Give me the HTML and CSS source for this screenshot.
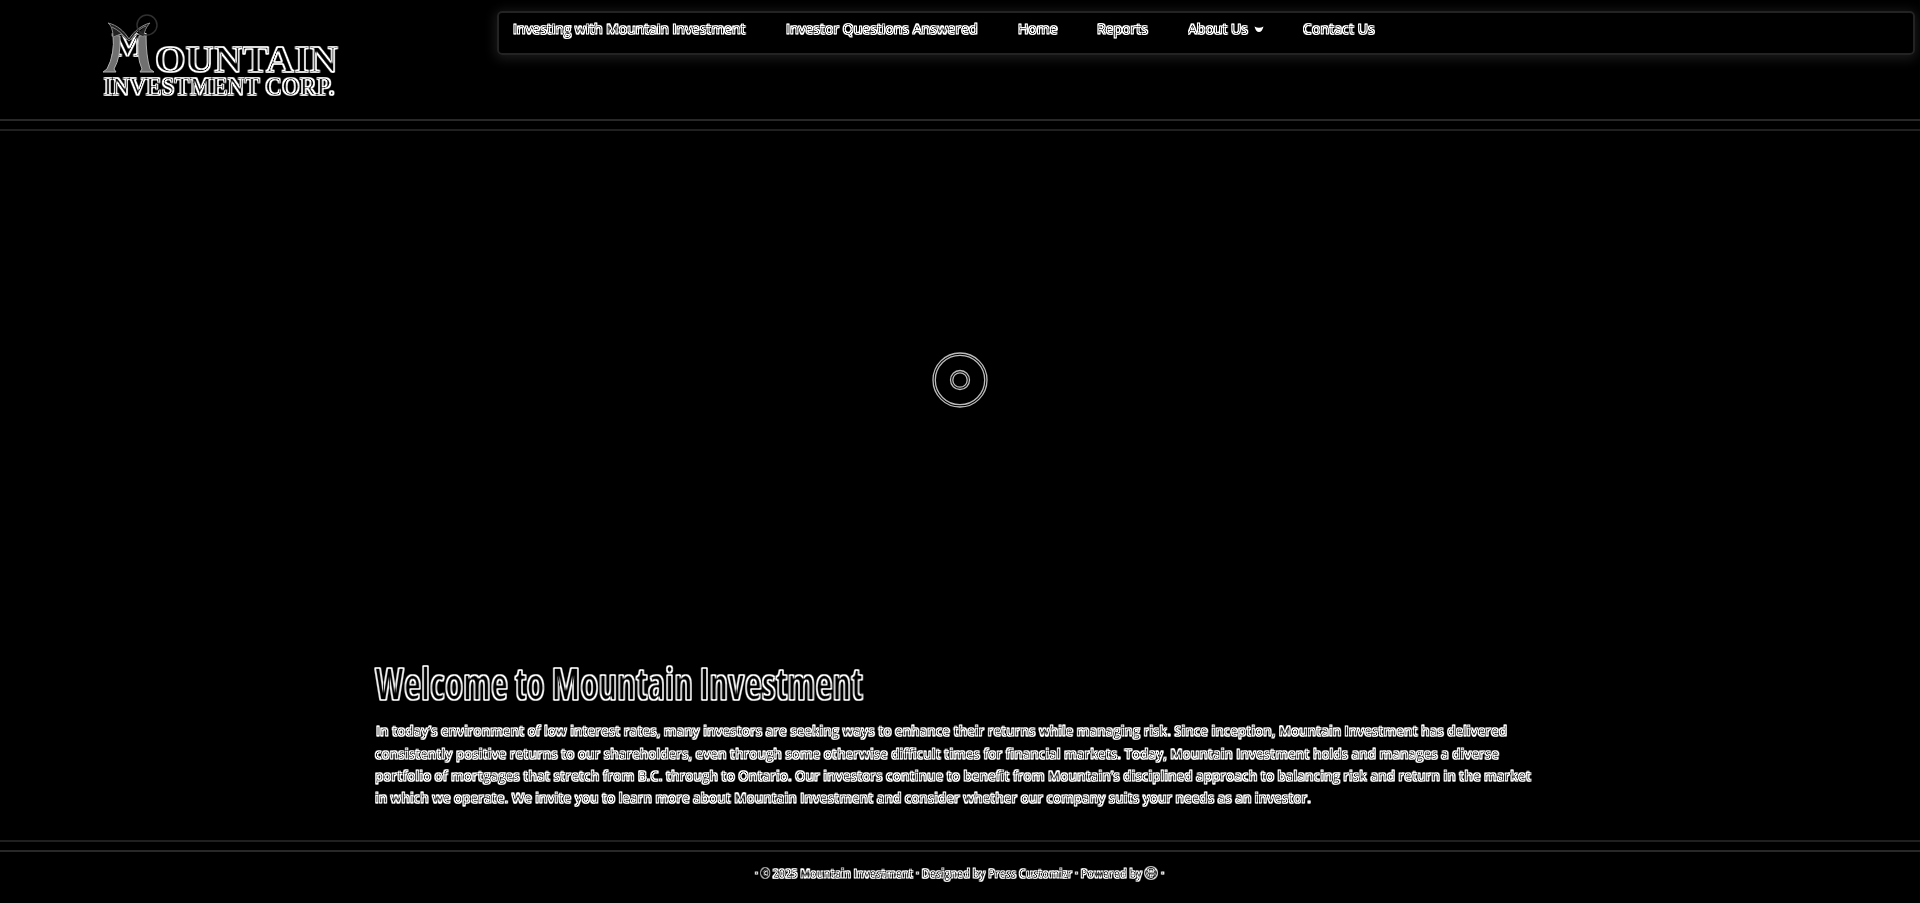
FILE: index.html
```html
<!DOCTYPE html>
<html lang="en">
<head>
<meta charset="utf-8">
<title>Mountain Investment</title>
<link rel="stylesheet" href="styles.css">
</head>
<body>
<svg class="defs" width="0" height="0" aria-hidden="true">
  <filter id="outline" x="0" y="0" width="1" height="1" color-interpolation-filters="sRGB">
    <feConvolveMatrix in="SourceGraphic" order="3" kernelMatrix="-1 0 1 -2 0 2 -1 0 1" divisor="4" preserveAlpha="true" result="right"/>
    <feConvolveMatrix in="SourceGraphic" order="3" kernelMatrix="1 0 -1 2 0 -2 1 0 -1" divisor="4" preserveAlpha="true" result="left"/>
    <feConvolveMatrix in="SourceGraphic" order="3" kernelMatrix="-1 -2 -1 0 0 0 1 2 1" divisor="4" preserveAlpha="true" result="down"/>
    <feConvolveMatrix in="SourceGraphic" order="3" kernelMatrix="1 2 1 0 0 0 -1 -2 -1" divisor="4" preserveAlpha="true" result="up"/>
    <feComposite in="right" in2="left" operator="arithmetic" k2="1" k3="1" result="h"/>
    <feComposite in="down" in2="up" operator="arithmetic" k2="1" k3="1" result="v"/>
    <feComposite in="h" in2="v" operator="arithmetic" k2="1" k3="1"/>
  </filter>
</svg>
<header class="header">
  <a class="logo">
    <svg width="260" height="100" viewBox="90 5 260 100">
      <g class="etched">
        <rect class="ground" x="90" y="5" width="260" height="100"/>
        <text class="logo-text" x="112" y="56" font-size="33" textLength="35" lengthAdjust="spacingAndGlyphs">M</text>
        <text class="logo-text" x="155" y="72" font-size="38.500" textLength="183" lengthAdjust="spacingAndGlyphs">OUNTAIN</text>
        <text class="logo-text" x="103.500" y="94.500" font-size="24.500" textLength="231" lengthAdjust="spacingAndGlyphs">INVESTMENT CORP.</text>
      </g>
      <path class="slope" d="M113 35L120 36Q121 57 114 69L116 72H103L107 69Q115 54 113 35ZM139 36L146 35Q146 56 150 69L154 72H140L142 69Q136 56 139 36Z"/>
      <path class="wing" d="M113 37C113 30 111 25 108 23C117 25 124 31 129 39C134 31 142 25 150 23C146 27 144 32 144 37L137 34L129 41L121 34ZM112 27C118 30 123 34 127 40M146 26C139 29 134 34 131 40"/>
      <circle class="sun" cx="147" cy="25" r="10"/>
    </svg>
  </a>
  <nav class="nav">
    <a class="etched n1">Investing with Mountain Investment</a>
    <a class="etched n2">Investor Questions Answered</a>
    <a class="etched n3">Home</a>
    <a class="etched n4">Reports</a>
    <a class="etched n5">About Us</a>
    <svg class="caret" width="10" height="7" viewBox="0 0 10 7"><path d="M.5 .5Q5 3 9.500 .5Q8 6 5 6Q2 6 .5 .5Z"/></svg>
    <a class="etched n6">Contact Us</a>
  </nav>
</header>
<div class="rule"></div>
<section class="hero">
  <svg width="60" height="60" viewBox="0 0 60 60">
    <circle cx="30" cy="30" r="27"/><circle cx="30" cy="30" r="24.700"/>
    <circle cx="30" cy="30" r="9.500"/><circle cx="30" cy="30" r="7.200"/>
  </svg>
</section>
<main class="main">
  <h1 class="title"><svg width="520" height="56"><g class="etched"><rect class="ground" x="-4" width="524" height="56"/><text class="title-text" x="0" y="38" textLength="488" lengthAdjust="spacingAndGlyphs">Welcome to Mountain Investment</text></g></svg></h1>
  <div class="copy">
    <svg width="1170" height="96"><g class="etched"><rect class="ground" x="-4" width="1174" height="96"/>
      <text class="copy-text" x="1" y="17" textLength="1131" lengthAdjust="spacingAndGlyphs">In today’s environment of low interest rates, many investors are seeking ways to enhance their returns while managing risk. Since inception, Mountain Investment has delivered</text>
      <text class="copy-text" x="0" y="40" textLength="1124" lengthAdjust="spacingAndGlyphs">consistently positive returns to our shareholders, even through some otherwise difficult times for financial markets. Today, Mountain Investment holds and manages a diverse</text>
      <text class="copy-text" x="0" y="62" textLength="1156" lengthAdjust="spacingAndGlyphs">portfolio of mortgages that stretch from B.C. through to Ontario. Our investors continue to benefit from Mountain’s disciplined approach to balancing risk and return in the market</text>
      <text class="copy-text" x="0" y="84" textLength="936" lengthAdjust="spacingAndGlyphs">in which we operate. We invite you to learn more about Mountain Investment and consider whether our company suits your needs as an investor.</text>
    </g></svg>
  </div>
</main>
<div class="rule rule-bottom"></div>
<footer class="footer">
  <svg width="430" height="26"><g class="etched"><rect class="ground" width="430" height="26"/>
    <text class="foot-text" x="5" y="17" textLength="387" lengthAdjust="spacingAndGlyphs">· © 2025 Mountain Investment · Designed by Press Customizr · Powered by</text>
    <circle class="wp" cx="401" cy="12" r="5.500"/><path class="wp" d="M397 9L399.500 15L401 10L403 15L405 9"/>
    <text class="foot-text" x="411" y="17">·</text>
  </g></svg>
</footer>
</body>
</html>
```
FILE: styles.css
```css
* { box-sizing: border-box; }
body { margin: 0; height: 903px; overflow: hidden; background: #000; color: #fff; font-family: "Noto Sans", sans-serif; display: flex; flex-direction: column; }
svg { display: block; overflow: visible; }
.defs { position: absolute; }
.etched { filter: url(#outline); background: #000; }
.ground { fill: #000; }
.header { display: flex; height: 119px; padding-top: 5px; flex: none; }
.logo { margin-left: 90px; width: 407px; }
.logo-text { fill: #ddd; font-family: "Liberation Serif", serif; font-weight: 700; }
.slope { fill: #707070; stroke: #b0b0b0; stroke-width: 1; }
.wing { fill: #222; stroke: #888; stroke-width: 1; }
.sun { fill: none; stroke: #303030; stroke-width: 1.500; }
.nav { display: flex; align-items: flex-start; width: 1418px; height: 44px; margin-top: 6px; padding: 5px 0 0 14px; border: 2px solid #232323; border-radius: 5px; box-shadow: 0 2px 12px 2px #1b1b1b; font-size: 14px; line-height: 22px; }
.nav a { white-space: nowrap; flex: none; font-family: "Open Sans", sans-serif; font-weight: 400; }
.nav .n1 { width: 273px; letter-spacing: -.05px; }
.n2 { width: 232px; } .n3 { width: 79px; } .n4 { width: 91px; } .n5 { width: 66px; } .n6 { width: 90px; letter-spacing: .1px; }
.caret { margin: 8px 39px 0 0; fill: #fff; }
.rule { height: 12px; border-top: 2px solid #282828; border-bottom: 2px solid #202020; flex: none; }
.rule-bottom { border-color: #202020 #000 #282828; }
.hero { height: 498px; padding-top: 219px; display: flex; justify-content: center; flex: none; }
.hero svg { fill: none; stroke: #bbb; stroke-width: 1.300; }
.main { margin-left: 375px; height: 211px; padding-top: 33px; flex: none; }
.title { margin: 0; height: 57px; }
.title-text { font-family: "Open Sans", sans-serif; font-stretch: condensed; font-weight: 700; font-size: 45px; fill: #ccc; }
.copy-text { font-family: "Open Sans", sans-serif; font-size: 15px; font-weight: 600; fill: #ddd; }
.footer { display: flex; padding: 9px 0 0 750px; }
.foot-text { font-family: "Open Sans", sans-serif; font-size: 12px; font-weight: 600; fill: #ddd; }
.wp { fill: none; stroke: #ccc; stroke-width: 1.200; }
```
